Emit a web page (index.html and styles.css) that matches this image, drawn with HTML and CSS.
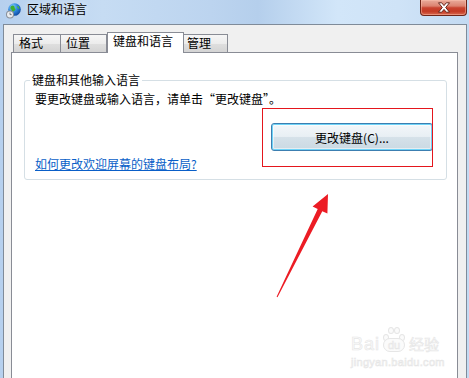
FILE: index.html
```html
<!DOCTYPE html>
<html lang="zh-CN">
<head>
<meta charset="utf-8">
<title>区域和语言</title>
<link rel="stylesheet" href="styles.css">
</head>
<body>
<div class="window">
  <div class="titlebar">
    <svg class="app-icon" width="16" height="16" viewBox="0 0 16 16">
      <defs>
        <radialGradient id="g" cx="0.35" cy="0.3" r="0.8">
          <stop offset="0" stop-color="#8fd0ff"/>
          <stop offset="0.5" stop-color="#2b86dc"/>
          <stop offset="1" stop-color="#0b3f96"/>
        </radialGradient>
      </defs>
      <circle cx="9.5" cy="6.5" r="6.3" fill="url(#g)"/>
      <path d="M6 3.2c1.2-.9 2.6-.8 3.4.2.6.8-.2 1.6.6 2.2.9.6.4 1.8-.5 2.1-.8.3-1.2 1.2-2 .9-.8-.4-.4-1.6-1.2-2.1C5.4 5.9 5 4 6 3.2z" fill="#3fae2f"/>
      <path d="M12.5 2.8c.9.6 1.8 1.6 1.9 2.8-.8.2-1.300-.4-1.8-.9-.4-.4-.6-1.2-.1-1.900z" fill="#4cbb34"/>
      <circle cx="5" cy="11.6" r="4" fill="#8a9099"/>
      <circle cx="5" cy="11.6" r="3" fill="#e9ecef"/>
      <path d="M5 9.6v2h1.6" stroke="#5b6067" stroke-width="0.8" fill="none"/>
    </svg>
    <span class="title">区域和语言</span>
    <div class="close">
      <svg width="14" height="11" viewBox="0 0 14 11">
        <path d="M1.5 0.8h3.2L7 3.6 9.3 0.8h3.2L8.7 5.5l3.8 4.7H9.3L7 7.4 4.7 10.2H1.5l3.8-4.7z" fill="#fff" stroke="#5a1a10" stroke-width="0.9" stroke-linejoin="round"/>
      </svg>
    </div>
  </div>
  <div class="client">
    <div class="tabs">
      <div class="tab tab-1">格式</div>
      <div class="tab tab-2">位置</div>
      <div class="tab tab-3 active">键盘和语言</div>
      <div class="tab tab-4">管理</div>
    </div>
    <div class="panel">
      <fieldset class="group">
        <legend>键盘和其他输入语言</legend>
        <p class="desc">要更改键盘或输入语言，请单击“更改键盘”。</p>
        <div class="btn-row">
          <button class="btn" type="button">更改键盘(C)...</button>
        </div>
        <a class="link" href="#">如何更改欢迎屏幕的键盘布局?</a>
      </fieldset>
    </div>
  </div>

  <div class="highlight"></div>
  <svg class="arrow" width="469" height="378" viewBox="0 0 469 378">
    <polygon points="328,194 327.4,213.6 322.3,211.2 277.5,297.3 276.6,296.8 317.7,208.9 312.6,206.4" fill="#ec1c24"/>
  </svg>
  <div class="watermark">
    <div class="wm-top">
      <span class="wm-bai">Bai</span>
      <span class="wm-paw">
        <span class="toe t1"></span><span class="toe t2"></span><span class="toe t3"></span><span class="toe t4"></span>
        <span class="wm-du">du</span>
      </span>
      <span class="wm-jy">经验</span>
    </div>
    <div class="wm-url">jingyan.baidu.com</div>
  </div>
</div>
</body>
</html>
```
FILE: styles.css
```css
* { box-sizing: border-box; }
html, body { margin: 0; padding: 0; }
body {
  width: 469px;
  height: 378px;
  overflow: hidden;
  font-family: "Noto Sans CJK SC", "Noto Sans", sans-serif;
  font-size: 12px;
  color: #000;
}
.window {
  position: relative;
  width: 469px;
  height: 378px;
  display: flex;
  flex-direction: column;
  background: linear-gradient(90deg, #b6d0ee 0%, #c6dcf3 22%, #bcd4ef 45%, #b5cfec 55%, #d2e6f9 72%, #cfe3f7 85%, #c3daf2 100%);
}
.titlebar {
  height: 24px;
  display: flex;
  align-items: flex-start;
  flex: none;
}
.app-icon {
  margin: 3px 0 0 5px;
  flex: none;
}
.title {
  margin: 1px 0 0 6px;
  line-height: 16px;
  font-size: 12px;
  text-shadow: 0 0 6px rgba(255,255,255,0.9);
}
.close {
  margin-left: auto;
  margin-right: 2px;
  width: 47px;
  height: 16px;
  border: 1px solid #6e2417;
  border-top: none;
  border-radius: 0 0 4px 4px;
  background: linear-gradient(#e9ab9b 0%, #dc8370 40%, #c94430 52%, #c43a24 75%, #d8694f 100%);
  box-shadow: inset 0 0 0 1px rgba(255,200,180,0.45);
  display: flex;
  align-items: center;
  justify-content: center;
}
.client {
  flex: 1;
  margin-left: 3px;
  width: 464px;
  background: #f0f0f0;
  border: 1px solid #7f8b99;
  border-bottom: none;
  padding: 0 8px 0 7px;
  display: flex;
  flex-direction: column;
  min-height: 0;
}
.tabs {
  padding-top: 7px;
  height: 27px;
  margin-left: 2px;
  display: flex;
  align-items: flex-end;
  flex: none;
}
.tab {
  height: 18px;
  line-height: 16px;
  border: 1px solid #898c95;
  border-bottom: none;
  background: linear-gradient(#f6f6f6 0%, #ececec 50%, #dedede 55%, #d4d4d4 100%);
  white-space: nowrap;
}
.tab + .tab { border-left: none; }
.tab-1 { width: 48px; padding-left: 5px; }
.tab-2 { width: 46px; padding-left: 5px; }
.tab-3 { width: 77px; padding-left: 5px; }
.tab-4 { width: 44px; padding-left: 3px; }
.tab.active {
  height: 21px;
  margin-bottom: -1px;
  background: #fff;
  border-left: 1px solid #898c95;
  position: relative;
  z-index: 1;
}
.tab.active + .tab { border-left: none; }
.panel {
  flex: 1;
  background: #fff;
  border: 1px solid #898c95;
  border-bottom: none;
  display: flex;
  flex-direction: column;
}
.group {
  margin: 19px 10px 0 12px;
  padding: 0 0 7px 0;
  border: 1px solid #d5dfe5;
  border-radius: 3px;
  min-width: 0;
}
.group legend {
  margin-left: 5px;
  padding: 0 2px;
  line-height: 16px;
  font-size: 12px;
}
.desc {
  margin: 3px 0 0 10px;
  line-height: 16px;
}
.btn-row {
  display: flex;
  justify-content: flex-end;
  margin: 16px 13px 0 0;
}
.btn {
  width: 162px;
  height: 28px;
  padding: 0;
  font-family: inherit;
  font-size: 12px;
  color: #000;
  border: 1px solid #3c7fb1;
  border-radius: 3px;
  background: linear-gradient(#f3f7fa 0%, #e8eff4 48%, #d5e1e9 52%, #cad9e3 100%);
  box-shadow: inset 0 0 0 1px #6fd3f7, inset 0 0 0 2px rgba(255,255,255,0.5);
}
.link {
  display: block;
  margin: 5px 0 0 10px;
  line-height: 16px;
  color: #0a5fc8;
  text-decoration: underline;
  align-self: flex-start;
}
.highlight {
  position: absolute;
  left: 262px;
  top: 108px;
  width: 171px;
  height: 59px;
  border: 1px solid #e4161d;
}
.arrow {
  position: absolute;
  left: 0;
  top: 0;
}
.watermark {
  position: absolute;
  left: 351px;
  top: 324px;
  color: #fbfbfb;
  -webkit-text-stroke: 0.6px #e6e6e6;
}
.wm-top {
  display: flex;
  align-items: flex-end;
  height: 28px;
}
.wm-bai {
  font-family: "Liberation Sans", sans-serif;
  font-size: 18px;
  line-height: 16px;
  letter-spacing: 1px;
}
.wm-paw {
  position: relative;
  width: 24px;
  height: 26px;
  margin-left: 2px;
}
.toe {
  position: absolute;
  width: 6px;
  height: 7px;
  border: 1px solid #e6e6e6;
  border-radius: 50%;
  background: #fbfbfb;
}
.t1 { left: 1px; top: 8px; }
.t2 { left: 6px; top: 1px; }
.t3 { left: 12px; top: 1px; }
.t4 { left: 17px; top: 8px; }
.wm-du {
  position: absolute;
  left: 1px;
  bottom: 0;
  width: 22px;
  height: 14px;
  border: 1px solid #e6e6e6;
  border-radius: 8px;
  font-family: "Liberation Sans", sans-serif;
  font-size: 11px;
  line-height: 12px;
  text-align: center;
  background: #fbfbfb;
}
.wm-jy {
  margin-left: 3px;
  font-size: 15px;
  line-height: 16px;
}
.wm-url {
  margin-top: 4px;
  font-family: "Liberation Sans", sans-serif;
  font-size: 11px;
  line-height: 12px;
  letter-spacing: 0.3px;
}
```
